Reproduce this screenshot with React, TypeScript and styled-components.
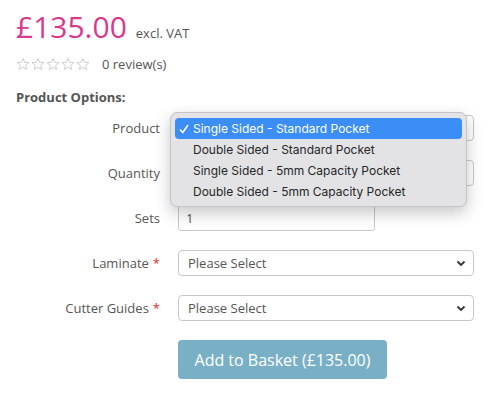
import React from "react";
import styled, { createGlobalStyle } from "styled-components";

const Global = createGlobalStyle`
  html, body { margin: 0; padding: 0; background: #fff; }
  body { font-family: "Open Sans", "Liberation Sans", sans-serif; color: #555; }
  * { box-sizing: border-box; }
`;

const Page = styled.div`
  padding: 12px 16px 0 16px;
  display: flex;
  flex-direction: column;
`;

const PriceRow = styled.div`
  display: flex;
  align-items: baseline;
  gap: 9px;
  height: 30px;
`;

const Price = styled.span`
  font-size: 30px;
  line-height: 30px;
  color: #d9388d;
`;

const Vat = styled.span`
  font-size: 13px;
  color: #555;
`;

const ReviewRow = styled.div`
  display: flex;
  align-items: center;
  gap: 12px;
  margin-top: 13px;
  height: 18px;
`;

const Stars = styled.div`
  display: flex;
  gap: 1px;
`;

const ReviewText = styled.span`
  font-size: 13px;
  line-height: 18px;
  color: #555;
`;

const Heading = styled.div`
  margin-top: 15px;
  font-size: 13px;
  line-height: 18px;
  font-weight: 700;
  color: #555;
`;

const Form = styled.div`
  margin-top: 9px;
  display: flex;
  flex-direction: column;
  gap: 19px;
`;

const Row = styled.div`
  display: grid;
  grid-template-columns: 144px 1fr;
  column-gap: 18px;
  align-items: center;
`;

const Label = styled.label`
  text-align: right;
  font-size: 13px;
  color: #555;
`;

const Req = styled.span`
  color: #e3262b;
  margin-left: 4px;
`;

const Field = styled.div`
  position: relative;
  height: 26px;
`;

const SelectBox = styled.div`
  width: 296px;
  height: 26px;
  border: 1px solid #c8c8c8;
  border-radius: 4px;
  padding: 0 7px 0 9px;
  display: flex;
  align-items: center;
  justify-content: space-between;
  font-size: 13px;
  color: #555;
  background: #fff;
`;

const Input = styled.div<{ $w: number }>`
  width: ${(p) => p.$w}px;
  height: 26px;
  border: 1px solid #c8c8c8;
  border-radius: 3px;
  padding: 0 7px;
  display: flex;
  align-items: center;
  font-size: 13px;
  color: #555;
`;

const Button = styled.button`
  margin-top: 19px;
  margin-left: 162px;
  align-self: flex-start;
  width: 209px;
  height: 39px;
  border: none;
  border-radius: 4px;
  background: #7ab0c6;
  color: #fff;
  font-family: "Open Sans", sans-serif;
  font-size: 16px;
  padding: 0;
`;

const Popup = styled.div`
  position: absolute;
  left: -8px;
  top: -3px;
  width: 297px;
  height: 95px;
  background: #e3e3e6;
  border: 1px solid #c4c4c8;
  border-radius: 7px;
  box-shadow: 0 6px 16px rgba(0, 0, 0, 0.22);
  padding: 5px 4px;
  font-family: Inter, "Liberation Sans", sans-serif;
  z-index: 5;
`;

const Option = styled.div<{ $sel?: boolean }>`
  height: 21px;
  display: flex;
  align-items: center;
  border-radius: 4px;
  padding-left: 4px;
  font-size: 12px;
  color: ${(p) => (p.$sel ? "#fff" : "#262626")};
  background: ${(p) => (p.$sel ? "#3b8ef6" : "transparent")};
`;

const Check = styled.span`
  width: 14px;
  display: inline-flex;
  align-items: center;
`;

const Star = () => (
  <svg width="14" height="14" viewBox="0 0 24 24">
    <path
      d="M12 2.5l2.9 6.6 7.1.6-5.4 4.7 1.6 7-6.2-3.7-6.2 3.7 1.6-7L2 9.7l7.1-.6z"
      fill="none"
      stroke="#c9c9c9"
      strokeWidth="1.6"
      strokeLinejoin="round"
    />
  </svg>
);

const Chevron = () => (
  <svg width="10" height="7" viewBox="0 0 10 7">
    <path d="M1.5 1.5L5 5l3.5-3.5" fill="none" stroke="#333" strokeWidth="1.8" />
  </svg>
);

const options = [
  "Single Sided - Standard Pocket",
  "Double Sided - Standard Pocket",
  "Single Sided - 5mm Capacity Pocket",
  "Double Sided - 5mm Capacity Pocket",
];

export default function App() {
  return (
    <>
      <Global />
      <Page>
        <PriceRow>
          <Price>£135.00</Price>
          <Vat>excl. VAT</Vat>
        </PriceRow>
        <ReviewRow>
          <Stars>
            {[0, 1, 2, 3, 4].map((i) => (
              <Star key={i} />
            ))}
          </Stars>
          <ReviewText>0 review(s)</ReviewText>
        </ReviewRow>
        <Heading>Product Options:</Heading>
        <Form>
          <Row>
            <Label>Product</Label>
            <Field>
              <SelectBox>
                <span />
                <Chevron />
              </SelectBox>
              <Popup>
                {options.map((o, i) => (
                  <Option key={o} $sel={i === 0}>
                    <Check>
                      {i === 0 && (
                        <svg width="10" height="10" viewBox="0 0 10 10">
                          <path d="M1 5.5L3.8 8.5L9 1" fill="none" stroke="#fff" strokeWidth="1.5" />
                        </svg>
                      )}
                    </Check>
                    {o}
                  </Option>
                ))}
              </Popup>
            </Field>
          </Row>
          <Row>
            <Label>Quantity</Label>
            <Field>
              <SelectBox>
                <span />
                <Chevron />
              </SelectBox>
            </Field>
          </Row>
          <Row>
            <Label>Sets</Label>
            <Field>
              <Input $w={197}>1</Input>
            </Field>
          </Row>
          <Row>
            <Label>
              Laminate<Req>*</Req>
            </Label>
            <Field>
              <SelectBox>
                <span>Please Select</span>
                <Chevron />
              </SelectBox>
            </Field>
          </Row>
          <Row>
            <Label>
              Cutter Guides<Req>*</Req>
            </Label>
            <Field>
              <SelectBox>
                <span>Please Select</span>
                <Chevron />
              </SelectBox>
            </Field>
          </Row>
        </Form>
        <Button>Add to Basket (£135.00)</Button>
      </Page>
    </>
  );
}
